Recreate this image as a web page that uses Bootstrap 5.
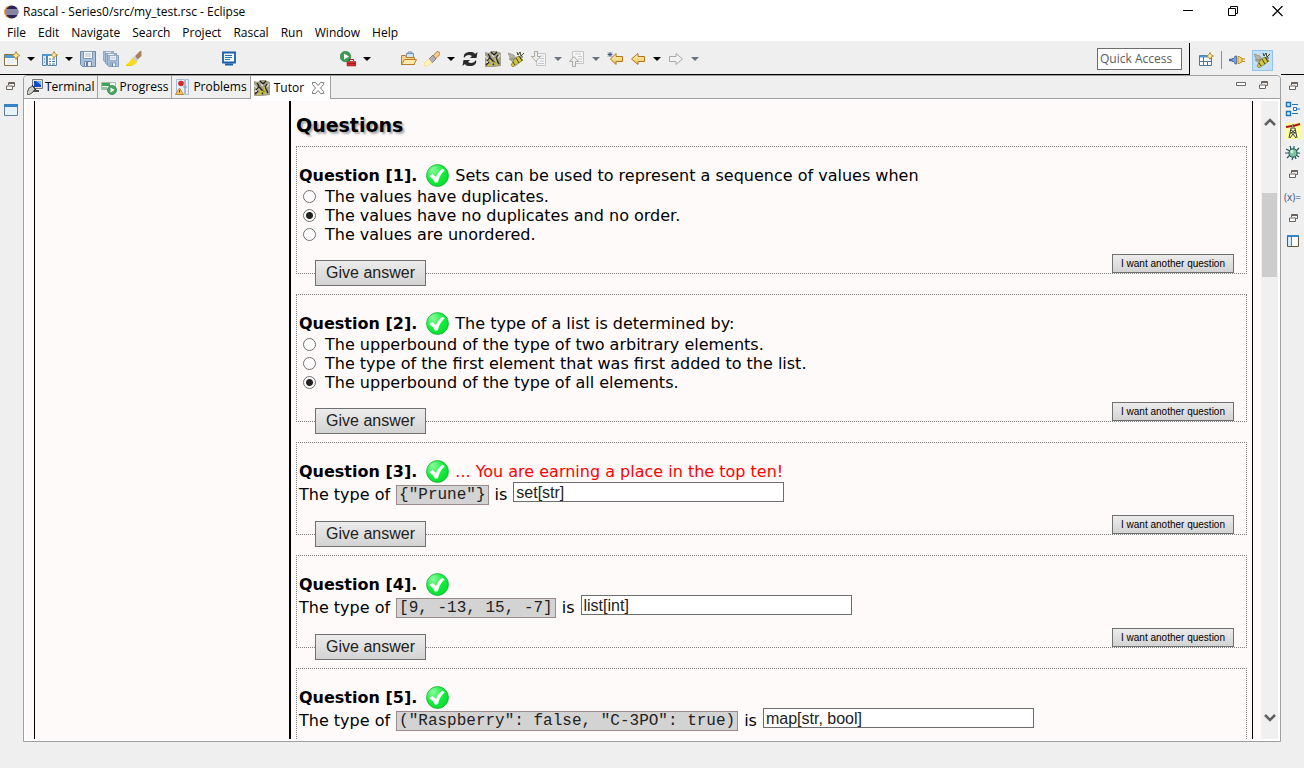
<!DOCTYPE html>
<html lang="en">
<head>
<meta charset="utf-8">
<meta name="viewport" content="width=device-width, initial-scale=1">
<title>Rascal - Series0/src/my_test.rsc - Eclipse</title>
<link href="https://cdn.jsdelivr.net/npm/bootstrap@5.3.0/dist/css/bootstrap.min.css" rel="stylesheet">
<style>
  body { font: 12px/16px "Open Sans", "Noto Sans", sans-serif; color: #000; background: #efefef; }
  button { border: 0; background: none; padding: 0; color: inherit; }
  svg { display: block; }
  .titlebar { height: 24px; }
  .win-btn { width: 45px; height: 24px; }
  .menus { height: 17px; gap: 12px; padding-left: 7px; }
  .menus a { color: #000; text-decoration: none; }
  .toolbar { height: 34px; }
  .tools { gap: 7px; padding-left: 4px; padding-top: 2px; border-bottom: 1px solid #000; }
  .gap-a { margin-left: 73px; }
  .gap-b { margin-left: 95px; }
  .gap-c { margin-left: 23px; }
  .quick { width: 85px; height: 22px; border: 1px solid #6d6d6d; background: #fff; padding: 0 2px; margin-right: 7px; }
  .quick::placeholder { color: #5c5c5c; opacity: 1; }
  .perspectives { width: 115px; gap: 7px; padding: 2px 31px 0 9px; border-left: 1px solid #000; margin-top: 2px; }
  .persp-on { width: 23px; height: 21px; background: #c4e0f7; border: 1px solid #90c4ee; }
  .workspace, .pane { min-height: 0; min-width: 0; }
  .trim-left { width: 23px; gap: 13px; padding: 7px 2px 0 0; }
  .trim-right { width: 23px; gap: 6px; padding-top: 4px; border-top: 1px solid #000; margin-top: -1px; }
  .vars { height: 16px; font-size: 10px; line-height: 14px; color: #345084; }
  .pane { border: 1px solid #a0a0a0; border-top-left-radius: 4px; border-top-right-radius: 4px; background: #fff; }
  .tabbar { height: 23px; background: #efefef; border-bottom: 1px solid #a0a0a0; border-radius: 4px 4px 0 0; }
  .tab-btn { gap: 2px; padding: 0 3px; border-right: 1px solid #a0a0a0; height: 22px; }
  .tab-on { height: 23px; background: #fff; gap: 4px; padding-right: 6px; }
  .pane-tools { gap: 13px; padding: 5px 12px 0 0; }
  .view { margin: 2px; background: #fffafa; min-height: 0; }
  .sheet { margin-left: 8px; border-left: 1px solid #000; border-right: 1px solid #000; min-width: 0; }
  .toc { width: 256px; border-right: 2px solid #000; }
  .lesson { font: 16px/19px "DejaVu Sans", Verdana, sans-serif; padding: 12px 5px 0; overflow: hidden; }
  .lesson h2 { font-size: 19px; line-height: 24px; font-weight: bold; margin-bottom: 9px; text-shadow: 2px 2px 2px #aaa; }
  .quiz { border: 1px dotted #808080; padding: 16px 12px 0 2px; margin-bottom: 20px; }
  .q-head { height: 24px; gap: 6px; padding-top: 1px; }
  .q-head svg { margin-left: 3px; }
  .q-line { height: 22px; gap: 6px; }
  .q-foot { height: 29px; padding-left: 16px; }
  .choice { height: 19px; gap: 9px; padding-left: 4px; }
  .choice input { appearance: none; width: 13px; height: 13px; margin: 0; border: 1px solid #707070; border-radius: 50%; background: #fff; }
  .choice input:checked { background: radial-gradient(circle, #222 3px, #fff 4px); }
  .snippet { font: 16px/18px "Liberation Mono", "Courier New", monospace; color: #222; background: #d3d3d3; border: 1px solid #9c8a8c; padding: 0 2px; margin-top: 2px; }
  .reply { width: 271px; height: 20px; font: 16px/18px "Liberation Sans", Arial, sans-serif; color: #222; border: 1px solid #6d6d6d; padding: 2px 2px 0; background: #fff; margin-top: -4px; }
  .give, .another { border: 1px solid #707070; background: linear-gradient(#ececec, #d3d3d3); font-family: "Liberation Sans", Arial, sans-serif; }
  .give { width: 111px; height: 26px; font-size: 16px; line-height: 24px; margin-bottom: -13px; color: #222; }
  .another { width: 122px; height: 19px; font-size: 10px; line-height: 16px; }
  .praise { color: #f00; }
  .scroller { width: 17px; background: #f0f0f0; margin: 0 0 0 8px; padding: 16px 0; }
  .scroll-thumb { width: 15px; height: 84px; background: #cdcdcd; margin-top: 66px; }
  .status { height: 26px; }
</style>
</head>
<body class="vh-100 d-flex flex-column overflow-hidden">

<svg width="0" height="0" class="position-absolute" aria-hidden="true">
  <defs>
    <linearGradient id="g-gold" x1="0" y1="0" x2="0" y2="1"><stop offset="0" stop-color="#fff6c8"/><stop offset="1" stop-color="#f0c050"/></linearGradient>
    <radialGradient id="g-ok" cx=".3" cy=".25" r=".9"><stop offset="0" stop-color="#8dfa9f"/><stop offset=".5" stop-color="#14f03c"/><stop offset="1" stop-color="#04d92f"/></radialGradient>
    <symbol id="i-ok" viewBox="0 0 24 24"><circle cx="12" cy="12" r="11.400" fill="url(#g-ok)" stroke="#16a834" stroke-width=".8"/><path d="M3.500 12.500l3.500-2 3.500 3c1.500-4 4-7 7-8.500l2 1.500c-3.500 3-6 7.500-7 12.500l-3 .5c-1.500-3-3.500-5-6-7z" fill="#fff"/></symbol>
    <symbol id="i-arrow" viewBox="0 0 8 16"><path d="M0 6h8L4 10z" fill="currentColor"/></symbol>
    <symbol id="i-new" viewBox="0 0 16 16"><path d="M.5 3.500h13v11H.5z" fill="#fffbe8" stroke="#8a7448"/><path d="M1 4h10v3H1z" fill="#4a9bd8"/><path d="M3 8h7v5H3z" fill="#e8f1fb"/><path d="M12 .5l1.300 2.700L16 4.500l-2.700 1.300L12 8.500l-1.300-2.700L8 4.500l2.700-1.300z" fill="#ffe9a0" stroke="#b08a30" stroke-width=".9"/></symbol>
    <symbol id="i-newview" viewBox="0 0 16 16"><path d="M.5 3.500h4v11h-4z" fill="#d7e8f8" stroke="#5a83b0"/><path d="M5.500 3.500h9v11h-9z" fill="#fff" stroke="#5a83b0"/><path d="M0 3h11v2H0z" fill="#4a9bd8"/><path d="M7 8h2M10 8h3M7 10.500h2M10 10.500h3M7 13h2M10 13h3M2 8h1M2 11h1" stroke="#4879ab"/><path d="M12 .5l1.200 2.300L15.500 4l-2.300 1.200L12 7.500l-1.200-2.300L8.500 4l2.300-1.200z" fill="#ffe9a0" stroke="#b08a30" stroke-width=".9"/></symbol>
    <symbol id="i-save" viewBox="0 0 16 16"><path d="M.5.5h15v15h-13l-2-2z" fill="#a9c0dc" stroke="#7189a8"/><path d="M3.500.500h9v7h-9z" fill="#f6f8fb" stroke="#8097b5"/><path d="M5 3h6M5 5h6" stroke="#b3c0d0"/><path d="M4.500 10.500h7v5h-7z" fill="#e7ecf2" stroke="#7189a8"/><path d="M6 11h2v4H6z" fill="#687f9c"/></symbol>
    <symbol id="i-brush" viewBox="0 0 16 16"><path d="M9 5l5-5h1.500v5L11 9z" fill="#a3845d"/><path d="M6 7l3-2 3 4-2 3z" fill="#c8cdd3"/><path d="M6 7c-2 3-3 5-6 6.500L2 15c4 0 7-1 9-4z" fill="#f7dc1a"/><path d="M0 14.500h6" stroke="#efcb00"/></symbol>
    <symbol id="i-screen" viewBox="0 0 16 16"><path d="M1 1.500h12v10H1z" fill="#f5fbff" stroke="#1b5faa" stroke-width="1.800"/><path d="M3 4.500h7M3 6.500h7M3 8.500h5" stroke="#2a6fb5"/><path d="M3 13.500h8" stroke="#1b5faa" stroke-width="2"/></symbol>
    <symbol id="i-run" viewBox="0 0 16 16"><circle cx="5.500" cy="5.500" r="5.300" fill="#3f9c54" stroke="#21763a" stroke-width=".6"/><path d="M4 2.500l5 3-5 3z" fill="#fff"/><path d="M7 10.500h9V15H7z" fill="#d82b30" stroke="#8c1c20" stroke-width=".5"/><path d="M9.500 10V8.500h4V10M7 12.500h9" fill="none" stroke="#a81c22"/></symbol>
    <symbol id="i-folder" viewBox="0 0 16 16"><path d="M5.500 6V2.500h7V8" fill="#d5e2f3" stroke="#7b8fac"/><path d="M7 2V1h4v1" fill="none" stroke="#7b8fac"/><path d="M.5 13.500v-9h4l1 2h8v7z" fill="#f7d58c" stroke="#b57d2c"/><path d="M.5 13.500l3-5h12l-2.500 5z" fill="#ffe7ae" stroke="#b57d2c"/></symbol>
    <symbol id="i-torch" viewBox="0 0 16 16"><path d="M9 5l4-4.500 3 1v2L11 8z" fill="#f9c987" stroke="#b4742a" stroke-width=".8"/><path d="M5 8l4-4 3 4-4 4z" fill="#b5aeb0" stroke="#77696b" stroke-width=".7"/><path d="M5 8l3 4-5 3H0v-3z" fill="#fff4b6" stroke="#edd485" stroke-width=".6"/></symbol>
    <symbol id="i-sync" viewBox="0 0 16 16"><path d="M15.500 1l-1 6H8l2-2C7 3 4 4 2 7 1 3 4 1 8 1c2 0 4 0 5 2zM.5 15l1-6H8l-2 2c3 2 6 1 8-2 1 4-2 6-6 6-2 0-4 0-5-2z" fill="#2b2b2b"/></symbol>
    <symbol id="i-tutor" viewBox="0 0 16 16"><path d="M0 1l4 1 2-2h5l5 2v13l-7 1H0z" fill="#a3a08c"/><path d="M3 3l2 3-3 4M6 1l3 3 3-3M13 4l-2 3 3 6M5 7l4 4M1 14l3-3M8 14l2-3" stroke="#22221b" stroke-width="1.200" fill="none"/><path d="M5 9l2 4M8 11l4 3M10 7l1 4M3 14h4" stroke="#d2c824" stroke-width="1.300"/><path d="M0 5l3 3M13 7l2-3M1 11h2M7 4l2 2" stroke="#e3e2d8" stroke-width="1.300"/></symbol>
    <symbol id="i-bee" viewBox="0 0 16 16"><path d="M0 2l6 2 2 4-5 1zM1 8l5-1-1 4z" fill="#b5b3a7" stroke="#88867b" stroke-width=".6"/><path d="M7 7l4-2 4 4-4 3-6 4-2-2z" fill="#cfc640" stroke="#6c661e" stroke-width=".6"/><path d="M9 1l1 3 2-3 1 4 3-3M8 7l3 5M5 11l2 3M11 5l3 5M12 6h3" stroke="#34311a" fill="none" stroke-width=".9"/></symbol>
    <symbol id="i-next" viewBox="0 0 16 16"><path d="M5.500 2.500h9v12h-9z" fill="#f6f6f6" stroke="#c4c4c4"/><path d="M9 5h4M9 7.500h4M9 10h4M7 12.500h6" stroke="#c4cad2"/><path d="M3.500.5h3v5h3L5 10.500.5 5.500h3z" fill="#ececec" stroke="#a9a9a0"/></symbol>
    <symbol id="i-prev" viewBox="0 0 16 16"><path d="M3.500.5h11v12h-11z" fill="#f6f6f6" stroke="#c4c4c4"/><path d="M6 3h6M9 5.500h4M9 8h4M9 10.500h4" stroke="#c4cad2"/><path d="M3.500 15.500h3v-5h3L5 5.500.5 10.500h3z" fill="#ececec" stroke="#a9a9a0"/></symbol>
    <symbol id="i-lastedit" viewBox="0 0 16 16"><path d="M15.500 5.500v5H9v3L3.500 8 9 2.500v3z" fill="url(#g-gold)" stroke="#b5741d"/><path d="M3 1v5M.5 3.500h5M1 1.500l4 4M5 1.500l-4 4" stroke="#2f5588" stroke-width=".9"/></symbol>
    <symbol id="i-back" viewBox="0 0 16 16"><path d="M14.500 5.500v5H8v3L1.500 8 8 2.500v3z" fill="url(#g-gold)" stroke="#b5741d"/></symbol>
    <symbol id="i-fwd" viewBox="0 0 16 16"><path d="M1.500 5.500v5H8v3L14.500 8 8 2.500v3z" fill="#f3f3f3" stroke="#a8a8a8"/></symbol>
    <symbol id="i-restore" viewBox="0 0 9 9"><path d="M2.500 3V.5h6v4H6.500" fill="none" stroke="#6b625c"/><path d="M2 1.500h7M0 4.500h7" stroke="#6b625c"/><path d="M.5 4h6v3.500h-6z" fill="#fff" stroke="#6b625c"/></symbol>
    <symbol id="i-window" viewBox="0 0 14 12"><path d="M.5.5h13v11H.5z" fill="#e6f3fc" stroke="#5f7ea4"/><path d="M0 0h14v3H0z" fill="#3784c4"/></symbol>
  </defs>
</svg>

<header class="bg-white">
  <div class="titlebar d-flex align-items-center">
    <svg class="ms-1 me-1" width="15" height="14" viewBox="0 0 15 14"><ellipse cx="6.500" cy="7" rx="6.500" ry="6.500" fill="#f59b2c"/><circle cx="8" cy="7" r="6.500" fill="#2e2459"/><path d="M2 5h12M1.500 7h13M2 9h12" stroke="#e8e6f2"/></svg>
    <span>Rascal - Series0/src/my_test.rsc - Eclipse</span>
    <div class="ms-auto d-flex me-1">
      <button class="win-btn d-flex align-items-center justify-content-center" aria-label="Minimize"><svg width="10" height="10"><path d="M0 3.500h10" stroke="#000"/></svg></button>
      <button class="win-btn d-flex align-items-center justify-content-center" aria-label="Restore"><svg width="10" height="12" fill="none" stroke="#000"><path d="M.5 2.500h7v7h-7zM2.500 2V.5h7v7H8"/></svg></button>
      <button class="win-btn d-flex align-items-center justify-content-center" aria-label="Close"><svg width="11" height="13"><path d="M.5 0l10 10M10.500 0L.5 10" stroke="#000" stroke-width="1.200"/></svg></button>
    </div>
  </div>
  <nav class="menus d-flex align-items-center" aria-label="Main menu">
    <a href="#">File</a><a href="#">Edit</a><a href="#">Navigate</a><a href="#">Search</a><a href="#">Project</a><a href="#">Rascal</a><a href="#">Run</a><a href="#">Window</a><a href="#">Help</a>
  </nav>
</header>

<div class="toolbar d-flex flex-shrink-0">
  <div class="tools d-flex align-items-center flex-grow-1">
    <button aria-label="New"><svg width="16" height="16"><use href="#i-new"/></svg></button>
    <button aria-label="New menu"><svg width="8" height="16"><use href="#i-arrow"/></svg></button>
    <button aria-label="New view"><svg width="16" height="16"><use href="#i-newview"/></svg></button>
    <button aria-label="New view menu"><svg width="8" height="16"><use href="#i-arrow"/></svg></button>
    <button aria-label="Save"><svg width="16" height="16"><use href="#i-save"/></svg></button>
    <button aria-label="Save all"><svg width="16" height="16"><use href="#i-save" width="11" height="11"/><use href="#i-save" x="2" y="2" width="12" height="12"/><use href="#i-save" x="4" y="4" width="12" height="12"/></svg></button>
    <button aria-label="Clean"><svg width="16" height="16"><use href="#i-brush"/></svg></button>
    <button class="gap-a" aria-label="Console"><svg width="16" height="16"><use href="#i-screen"/></svg></button>
    <button class="gap-b" aria-label="Run tool"><svg width="16" height="16"><use href="#i-run"/></svg></button>
    <button aria-label="Run menu"><svg width="8" height="16"><use href="#i-arrow"/></svg></button>
    <button class="gap-c" aria-label="Open"><svg width="16" height="16"><use href="#i-folder"/></svg></button>
    <button aria-label="Search"><svg width="16" height="16"><use href="#i-torch"/></svg></button>
    <button aria-label="Search menu"><svg width="8" height="16"><use href="#i-arrow"/></svg></button>
    <button aria-label="Refresh"><svg width="16" height="16"><use href="#i-sync"/></svg></button>
    <button aria-label="Tutor"><svg width="16" height="16"><use href="#i-tutor"/></svg></button>
    <button aria-label="Rascal console"><svg width="16" height="16"><use href="#i-bee"/></svg></button>
    <button aria-label="Next annotation"><svg width="16" height="16"><use href="#i-next"/></svg></button>
    <button class="text-secondary" aria-label="Next menu"><svg width="8" height="16"><use href="#i-arrow"/></svg></button>
    <button aria-label="Previous annotation"><svg width="16" height="16"><use href="#i-prev"/></svg></button>
    <button class="text-secondary" aria-label="Previous menu"><svg width="8" height="16"><use href="#i-arrow"/></svg></button>
    <button aria-label="Last edit"><svg width="16" height="16"><use href="#i-lastedit"/></svg></button>
    <button aria-label="Back"><svg width="16" height="16"><use href="#i-back"/></svg></button>
    <button aria-label="Back menu"><svg width="8" height="16"><use href="#i-arrow"/></svg></button>
    <button aria-label="Forward"><svg width="16" height="16"><use href="#i-fwd"/></svg></button>
    <button class="text-secondary" aria-label="Forward menu"><svg width="8" height="16"><use href="#i-arrow"/></svg></button>
    <input class="quick ms-auto" type="text" placeholder="Quick Access" aria-label="Quick Access">
  </div>
  <div class="perspectives d-flex align-items-center">
    <button aria-label="Open perspective"><svg width="15" height="16" viewBox="0 0 15 16"><path d="M.5 3.500h12v10H.5z" fill="#fff" stroke="#4d789c"/><path d="M1 4.500h8" stroke="#4a9bd8" stroke-width="2"/><path d="M4.500 5v8M1 9.500h11M8.500 9v4" stroke="#4d789c"/><path d="M11 .5l1.200 2.300L14.500 4l-2.300 1.200L11 7.500 9.800 5.200 7.500 4l2.300-1.200z" fill="#ffe9a0" stroke="#b08a30" stroke-width=".9"/></svg></button>
    <svg width="1" height="18"><path d="M.5 0v18" stroke="#909090"/></svg>
    <button aria-label="Plug-in perspective"><svg width="16" height="16" viewBox="0 0 16 16"><path d="M0 8h3" stroke="#4a6fa5" stroke-width="2.500"/><path d="M3 6.500h2l1-2.500h1.500v8H6L5 9.500H3z" fill="#7ea3d8" stroke="#41639a" stroke-width=".8"/><path d="M9 4.500h1.500L12 6h1v4h-1l-1.500 1.500H9z" fill="#ffd766" stroke="#c08a20"/><path d="M13 7h3M13 9.500h3" stroke="#c08a20" stroke-width="1.200"/></svg></button>
    <button class="persp-on ms-auto d-flex align-items-center justify-content-center" aria-label="Rascal perspective"><svg width="16" height="16"><use href="#i-bee"/></svg></button>
  </div>
</div>

<div class="workspace d-flex flex-grow-1">
  <aside class="trim-left d-flex flex-column align-items-center" aria-label="Minimized views">
    <button aria-label="Restore views"><svg width="9" height="9"><use href="#i-restore"/></svg></button>
    <button aria-label="Editor area"><svg width="14" height="12"><use href="#i-window"/></svg></button>
  </aside>

  <main class="pane d-flex flex-column flex-grow-1">
    <div class="tabbar d-flex flex-shrink-0">
      <button class="tab-btn d-flex align-items-center"><svg width="16" height="16" viewBox="0 0 16 16"><path d="M5.500.5h10v9h-10z" fill="#e6e4da" stroke="#777"/><path d="M7 2h7v6H7z" fill="#1549c8"/><path d="M9 2l5 4V2z" fill="#77b6ff"/><path d="M3 11h9v2H3z" fill="#4b4b4b"/><path d="M0 14l2-5 4-2 2 3-3 4-4 2z" fill="#cfcfc4" stroke="#333" stroke-width=".8"/><path d="M5 6l4 5" stroke="#222"/></svg>Terminal</button>
      <button class="tab-btn d-flex align-items-center"><svg width="16" height="16" viewBox="0 0 16 16"><path d="M.5 3.500h14v7H.5z" fill="#f4f7f2" stroke="#a9b8a9"/><path d="M1 4h8v3H1z" fill="#3da35a"/><path d="M1 8h5v2H1z" fill="#8cc79a"/><circle cx="11" cy="11" r="4.500" fill="#4aa862" stroke="#217a3c" stroke-width=".7"/><path d="M9.500 8.500l4 2.500-4 2.500z" fill="#fff"/></svg>Progress</button>
      <button class="tab-btn d-flex align-items-center"><svg width="16" height="16" viewBox="0 0 16 16"><path d="M1.500.500h8v15h-8zM10.500.5h3v15h-3z" fill="#e7eff9" stroke="#a9bcd4"/><path d="M8 8h4" stroke="#8098b8"/><circle cx="6" cy="4.500" r="2.800" fill="#d9252b"/><path d="M4.500 9l4 6.500h-8z" fill="#f6c561" stroke="#b57c22" stroke-width=".8"/><path d="M4.500 11v2.500" stroke="#5e3c0a"/></svg>Problems</button>
      <button class="tab-btn tab-on d-flex align-items-center"><svg width="16" height="16"><use href="#i-tutor"/></svg>Tutor
        <svg class="ms-1" width="12" height="12" viewBox="0 0 12 12"><path d="M.5 .5h3L6 3.500 8.500.5h3v2L8.500 6l3 3.500v2h-3L6 8.500l-2.500 3h-3v-2L3.500 6l-3-3.500z" fill="#fff" stroke="#7d7d7d"/></svg></button>
      <div class="pane-tools ms-auto d-flex">
        <button class="align-self-start" aria-label="Minimize pane"><svg width="10" height="6"><path d="M.5 1.500h9v3h-9z" fill="#fff" stroke="#6b6b6b"/></svg></button>
        <button class="align-self-start" aria-label="Restore pane"><svg width="9" height="9"><use href="#i-restore"/></svg></button>
      </div>
    </div>

    <div class="view d-flex flex-grow-1">
      <div class="sheet d-flex flex-grow-1 overflow-hidden">
        <div class="toc flex-shrink-0"></div>
        <div class="lesson flex-grow-1">
          <h2>Questions</h2>

          <form class="quiz">
            <div class="q-head d-flex align-items-center"><b>Question [1].</b><svg width="23" height="23"><use href="#i-ok"/></svg><span>Sets can be used to represent a sequence of values when</span></div>
            <label class="choice d-flex align-items-center"><input type="radio" name="q1"><span>The values have duplicates.</span></label>
            <label class="choice d-flex align-items-center"><input type="radio" name="q1" checked><span>The values have no duplicates and no order.</span></label>
            <label class="choice d-flex align-items-center"><input type="radio" name="q1"><span>The values are unordered.</span></label>
            <div class="q-foot d-flex justify-content-between align-items-end"><button type="button" class="give">Give answer</button><button type="button" class="another">I want another question</button></div>
          </form>

          <form class="quiz">
            <div class="q-head d-flex align-items-center"><b>Question [2].</b><svg width="23" height="23"><use href="#i-ok"/></svg><span>The type of a list is determined by:</span></div>
            <label class="choice d-flex align-items-center"><input type="radio" name="q2"><span>The upperbound of the type of two arbitrary elements.</span></label>
            <label class="choice d-flex align-items-center"><input type="radio" name="q2"><span>The type of the first element that was first added to the list.</span></label>
            <label class="choice d-flex align-items-center"><input type="radio" name="q2" checked><span>The upperbound of the type of all elements.</span></label>
            <div class="q-foot d-flex justify-content-between align-items-end"><button type="button" class="give">Give answer</button><button type="button" class="another">I want another question</button></div>
          </form>

          <form class="quiz">
            <div class="q-head d-flex align-items-center"><b>Question [3].</b><svg width="23" height="23"><use href="#i-ok"/></svg><span class="praise">... You are earning a place in the top ten!</span></div>
            <div class="q-line d-flex align-items-center"><label for="a3">The type of</label><code class="snippet">{"Prune"}</code><span>is</span><input class="reply" id="a3" type="text" value="set[str]"></div>
            <div class="q-foot d-flex justify-content-between align-items-end"><button type="button" class="give">Give answer</button><button type="button" class="another">I want another question</button></div>
          </form>

          <form class="quiz">
            <div class="q-head d-flex align-items-center"><b>Question [4].</b><svg width="23" height="23"><use href="#i-ok"/></svg></div>
            <div class="q-line d-flex align-items-center"><label for="a4">The type of</label><code class="snippet">[9, -13, 15, -7]</code><span>is</span><input class="reply" id="a4" type="text" value="list[int]"></div>
            <div class="q-foot d-flex justify-content-between align-items-end"><button type="button" class="give">Give answer</button><button type="button" class="another">I want another question</button></div>
          </form>

          <form class="quiz">
            <div class="q-head d-flex align-items-center"><b>Question [5].</b><svg width="23" height="23"><use href="#i-ok"/></svg></div>
            <div class="q-line d-flex align-items-center"><label for="a5">The type of</label><code class="snippet">("Raspberry": false, "C-3PO": true)</code><span>is</span><input class="reply" id="a5" type="text" value="map[str, bool]"></div>
            <div class="q-foot"></div>
          </form>
        </div>
      </div>
      <div class="scroller d-flex flex-column align-items-center">
        <svg class="flex-shrink-0" width="12" height="10"><path d="M1 8l5-5 5 5" fill="none" stroke="#606060" stroke-width="2.500"/></svg>
        <div class="scroll-thumb flex-shrink-0"></div>
        <svg class="mt-auto flex-shrink-0" width="12" height="10"><path d="M1 2l5 5 5-5" fill="none" stroke="#606060" stroke-width="2.500"/></svg>
      </div>
    </div>
  </main>

  <aside class="trim-right d-flex flex-column align-items-center" aria-label="View shortcuts">
    <button aria-label="Restore outline group"><svg width="16" height="16"><use href="#i-restore" x="4" y="3" width="9" height="9"/></svg></button>
    <button aria-label="Outline"><svg width="16" height="16" viewBox="0 0 16 16"><path d="M1.500 1.500h4v4h-4zM1.500 10.500h4v4h-4z" fill="#d8ecfb" stroke="#1e74b8" stroke-width="1.400"/><path d="M7 3.500h6M7 12.500h6M12 8h3" stroke="#1e74b8"/><path d="M8.500 6.500h3v3h-3z" fill="#fff" stroke="#1e74b8"/></svg></button>
    <button aria-label="Windmill"><svg width="16" height="16" viewBox="0 0 16 16"><path d="M0 0h16v16H0z" fill="#ffff97"/><path d="M1 4l6-1M8 3l7-2" stroke="#b0121b" stroke-width="2"/><path d="M8 1v3M6 5h4l2 10M6 5L4 15M5 10h6M6 7l4 3M10 7l-4 3M5 15l3-4 3 4" fill="none" stroke="#333d55"/></svg></button>
    <button aria-label="Debug"><svg width="16" height="16" viewBox="0 0 16 16"><path d="M5 1l1 3M9 1v3M14 3l-3 3M1 4l4 2M0 8h4M2 13l3-3M7 15l1-3M11 14l-1-3M15 8h-4M14 12l-3-2" stroke="#24585a" stroke-width="1.200"/><ellipse cx="8" cy="8" rx="4" ry="4.200" fill="#7cc3a1" stroke="#24585a"/><circle cx="7" cy="6.500" r="1.500" fill="#d4f3df"/></svg></button>
    <button aria-label="Restore variables group"><svg width="16" height="16"><use href="#i-restore" x="4" y="3" width="9" height="9"/></svg></button>
    <button class="vars" aria-label="Variables">(x)=</button>
    <button aria-label="Restore editor group"><svg width="16" height="16"><use href="#i-restore" x="4" y="3" width="9" height="9"/></svg></button>
    <button aria-label="Layout view"><svg width="16" height="16" viewBox="0 0 16 16"><path d="M2.500 2.500h11v11h-11z" fill="#fff" stroke="#6a5633"/><path d="M2 3h12" stroke="#3784c4" stroke-width="2"/><path d="M3 4h3v9H3z" fill="#d5eaf9"/><path d="M6.500 4v9" stroke="#777"/></svg></button>
  </aside>
</div>
<footer class="status flex-shrink-0"></footer>

<script src="https://cdn.jsdelivr.net/npm/bootstrap@5.3.0/dist/js/bootstrap.bundle.min.js"></script>
</body>
</html>
